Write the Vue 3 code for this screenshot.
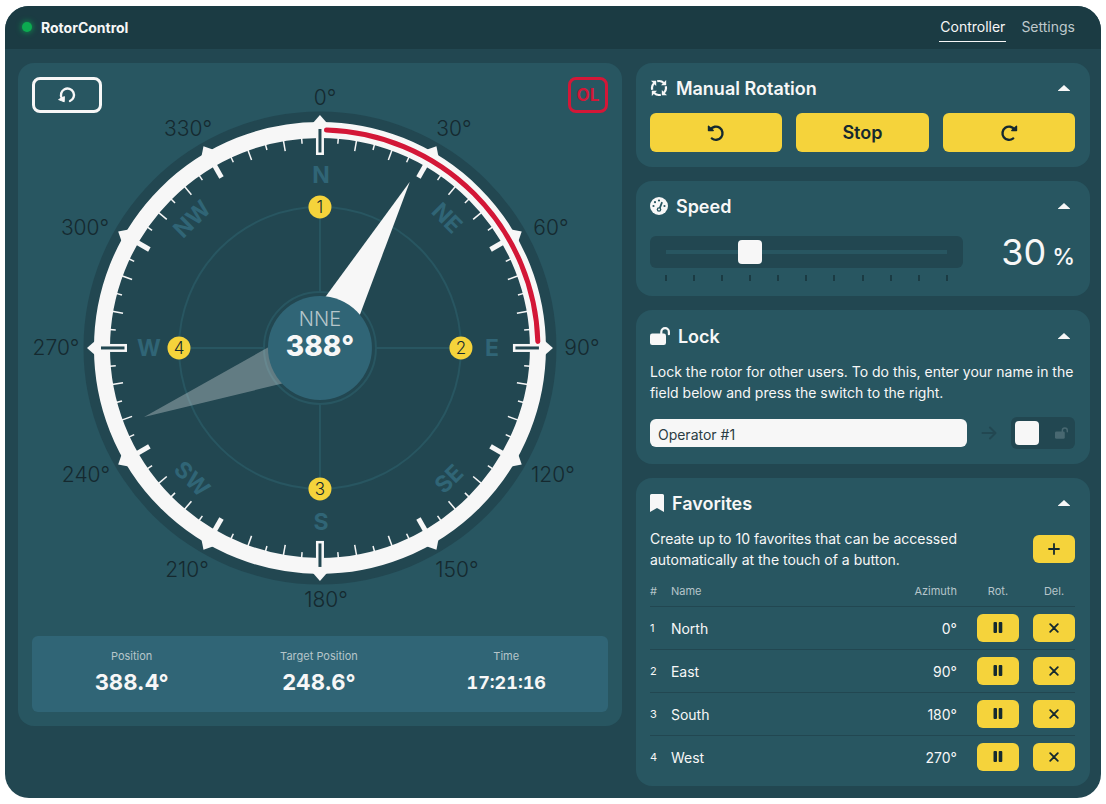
<script setup>
import { ref } from 'vue'

const operator = ref('Operator #1')
const speed = ref(30)
const locked = ref(false)

const stats = [
  { label: 'Position', value: '388.4°' },
  { label: 'Target Position', value: '248.6°' },
  { label: 'Time', value: '17:21:16', small: true },
]

const favorites = [
  { id: 1, name: 'North', azimuth: 0 },
  { id: 2, name: 'East', azimuth: 90 },
  { id: 3, name: 'South', azimuth: 180 },
  { id: 4, name: 'West', azimuth: 270 },
]

// Dial coordinates are relative to the centre of the compass.
const ticks = Array.from({ length: 72 }, (_, i) => i * 5)
  .filter((a) => a % 30 !== 0)
  .map((a) => ({ a, end: a % 10 === 0 ? -200 : -205 }))
const majors = [30, 60, 120, 150, 210, 240, 300, 330]
const cardinals = [0, 90, 180, 270]
const arrows = Array.from({ length: 12 }, (_, i) => i * 30)

const degrees = [
  { v: 0, x: 5, y: -250 },
  { v: 30, x: 134, y: -219 },
  { v: 60, x: 231, y: -120 },
  { v: 90, x: 262, y: 0 },
  { v: 120, x: 233, y: 127 },
  { v: 150, x: 137, y: 222 },
  { v: 180, x: 6, y: 252 },
  { v: 210, x: -133, y: 222 },
  { v: 240, x: -234, y: 127 },
  { v: 270, x: -264, y: 0 },
  { v: 300, x: -235, y: -120 },
  { v: 330, x: -132, y: -219 },
]

const directions = [
  { t: 'N', x: 1, y: -173, r: 0 },
  { t: 'NE', x: 127, y: -130, r: 45 },
  { t: 'E', x: 172, y: 0, r: 0 },
  { t: 'SE', x: 129, y: 131, r: -45 },
  { t: 'S', x: 1, y: 174, r: 0 },
  { t: 'SW', x: -128, y: 131, r: 45 },
  { t: 'W', x: -171, y: 0, r: 0 },
  { t: 'NW', x: -128, y: -129, r: -45 },
]

const pins = [
  { n: 1, x: 0, y: -141 },
  { n: 2, x: 141, y: 0 },
  { n: 3, x: 0, y: 141 },
  { n: 4, x: -141, y: 0 },
]
</script>

<template>
  <div class="frame">
    <header class="topbar">
      <div class="brand"><span class="status"></span>RotorControl</div>
      <nav class="nav">
        <a href="#controller" class="active">Controller</a>
        <a href="#settings">Settings</a>
      </nav>
    </header>

    <main class="layout">
      <section class="panel compass-panel">
        <div class="compass-bar">
          <button class="outline reset" type="button" aria-label="Reset rotation">
            <svg width="18" height="18" viewBox="0 0 18 18">
              <path d="M3.8 12.2A6.5 6.5 0 1 1 12 15" fill="none" stroke="currentColor" stroke-width="2.4" stroke-linecap="round" />
              <path d="M.6 13.6 6.4 10.6 6.2 15.8Z" fill="currentColor" stroke="currentColor" stroke-linejoin="round" />
            </svg>
          </button>
          <button class="outline overlap" type="button">OL</button>
        </div>

        <svg class="compass" viewBox="-288 -271 576 542" role="img" aria-label="Compass">
          <circle r="236.5" class="dial" />
          <circle r="141" class="guide" />
          <circle r="56" class="guide" />
          <path d="M0-141V-56M0 56V141M-141 0H-56M56 0H141" class="guide" />

          <circle r="218" class="ring" />
          <line v-for="t in ticks" :key="'t' + t.a" y1="-211" :y2="t.end" :transform="`rotate(${t.a})`" class="tick" />
          <line v-for="a in majors" :key="'m' + a" y1="-211" y2="-197" :transform="`rotate(${a})`" class="major" />
          <path v-for="a in arrows" :key="'a' + a" d="M0-233 7-225H-7Z" :transform="`rotate(${a})`" class="light" />
          <g v-for="a in cardinals" :key="'c' + a" :transform="`rotate(${a})`">
            <rect x="-4" y="-215" width="8" height="22" class="light" />
            <rect x="-1.5" y="-219" width="3" height="23.5" class="dial" />
          </g>
          <path d="M6.5-217.9A218 218 0 0 1 217.9-6.5" class="overlap-arc" />

          <text v-for="d in degrees" :key="'d' + d.v" :x="d.x" :y="d.y + 7" class="degree">{{ d.v }}°</text>
          <g v-for="d in directions" :key="d.t" :transform="`translate(${d.x} ${d.y}) rotate(${d.r})`">
            <text y="8" class="direction">{{ d.t }}</text>
          </g>

          <path d="M0-189 26 0H-26Z" transform="rotate(248.6)" class="light target" />
          <path d="M0-189 26 0H-26Z" transform="rotate(28.4)" class="light" />
          <g v-for="p in pins" :key="'p' + p.n" :transform="`translate(${p.x} ${p.y})`">
            <circle r="11.5" class="pin" />
            <text y="6" class="pin-text">{{ p.n }}</text>
          </g>
          <circle r="52" class="hub" />
          <text y="-22" class="hub-name">NNE</text>
          <text y="8" class="hub-value">388°</text>
        </svg>

        <dl class="stats">
          <div v-for="s in stats" :key="s.label">
            <dt>{{ s.label }}</dt>
            <dd :class="{ small: s.small }">{{ s.value }}</dd>
          </div>
        </dl>
      </section>

      <div class="side">
        <section class="panel">
          <div class="title">
            <svg width="18" height="18" viewBox="0 0 18 18">
              <g v-for="a in cardinals" :key="a" :transform="`rotate(${a} 9 9)`">
                <path d="M7.2 2.3Q11 1.2 13.8 4" fill="none" stroke="currentColor" stroke-width="2.2" />
                <path d="M16.2 1V6.2H11Z" fill="currentColor" />
              </g>
            </svg>
            <h2>Manual Rotation</h2>
            <button class="caret" type="button" aria-label="Collapse Manual Rotation">
              <svg width="12" height="6" viewBox="0 0 12 6"><path d="M6 0 12 5.5V6H0V5.5Z" fill="currentColor" /></svg>
            </button>
          </div>
          <div class="rotation">
            <button class="yellow" type="button" aria-label="Rotate counterclockwise">
              <svg width="18" height="18" viewBox="0 0 18 18">
                <path d="M3.4 5.6A6.6 6.6 0 1 1 4.8 14.4" fill="none" stroke="currentColor" stroke-width="2.4" stroke-linecap="round" />
                <path d="M1.5 2.2V6.6H6.2Z" fill="currentColor" stroke="currentColor" stroke-width="1.4" stroke-linejoin="round" />
              </svg>
            </button>
            <button class="yellow" type="button">Stop</button>
            <button class="yellow" type="button" aria-label="Rotate clockwise">
              <svg width="18" height="18" viewBox="0 0 18 18">
                <path d="M14.6 5.6A6.6 6.6 0 1 0 13.2 14.4" fill="none" stroke="currentColor" stroke-width="2.4" stroke-linecap="round" />
                <path d="M16.5 2.2V6.6H11.8Z" fill="currentColor" stroke="currentColor" stroke-width="1.4" stroke-linejoin="round" />
              </svg>
            </button>
          </div>
        </section>

        <section class="panel">
          <div class="title">
            <svg width="18" height="18" viewBox="0 0 18 18">
              <circle cx="9" cy="9" r="9" fill="currentColor" />
              <g class="cut">
                <circle cx="9" cy="3.5" r="1.1" /><circle cx="5" cy="5.2" r="1.1" />
                <circle cx="3.5" cy="9" r="1.1" /><circle cx="14.5" cy="9" r="1.1" />
                <circle cx="9" cy="12.5" r="2.3" />
                <path d="M11.3 4.7 12.9 5.4 10.2 12.5 8.5 11.8Z" />
              </g>
              <circle cx="9" cy="12.5" r="1" fill="currentColor" />
            </svg>
            <h2>Speed</h2>
            <button class="caret" type="button" aria-label="Collapse Speed">
              <svg width="12" height="6" viewBox="0 0 12 6"><path d="M6 0 12 5.5V6H0V5.5Z" fill="currentColor" /></svg>
            </button>
          </div>
          <div class="speed">
            <div class="slider">
              <div class="slider-box">
                <input v-model="speed" type="range" min="0" max="100" aria-label="Speed" />
              </div>
              <div class="marks"><i v-for="n in 11" :key="n"></i></div>
            </div>
            <output class="percent"><span>{{ speed }}</span><small>%</small></output>
          </div>
        </section>

        <section class="panel">
          <div class="title tall">
            <svg width="20" height="18" viewBox="0 0 20 18">
              <rect y="6.5" width="16" height="11.5" rx="2.2" fill="currentColor" />
              <path d="M11.3 8V5A3.8 3.8 0 0 1 18.9 5V7.2" fill="none" stroke="currentColor" stroke-width="2.2" stroke-linecap="round" />
            </svg>
            <h2>Lock</h2>
            <button class="caret" type="button" aria-label="Collapse Lock">
              <svg width="12" height="6" viewBox="0 0 12 6"><path d="M6 0 12 5.5V6H0V5.5Z" fill="currentColor" /></svg>
            </button>
          </div>
          <p class="copy">Lock the rotor for other users. To do this, enter your name in the field below and press the switch to the right.</p>
          <div class="lock-row">
            <input v-model="operator" class="field" type="text" aria-label="Operator name" />
            <svg class="arrow" width="16" height="16" viewBox="0 0 16 16">
              <path d="M1.5 8H14M9 2.5 14.5 8 9 13.5" fill="none" stroke="currentColor" stroke-width="2" stroke-linecap="round" stroke-linejoin="round" />
            </svg>
            <label class="switch">
              <input v-model="locked" type="checkbox" aria-label="Lock rotor" />
              <svg width="13" height="12" viewBox="0 0 20 18">
                <rect y="6.5" width="15" height="11.5" rx="2.2" fill="currentColor" />
                <path d="M11.3 8V5A3.8 3.8 0 0 1 18.9 5V7.2" fill="none" stroke="currentColor" stroke-width="2.2" stroke-linecap="round" />
              </svg>
            </label>
          </div>
        </section>

        <section class="panel">
          <div class="title">
            <svg width="14" height="18" viewBox="0 0 14 18"><path d="M1.5 0H12.5Q14 0 14 1.5V18L7 14 0 18V1.5Q0 0 1.5 0Z" fill="currentColor" /></svg>
            <h2>Favorites</h2>
            <button class="caret" type="button" aria-label="Collapse Favorites">
              <svg width="12" height="6" viewBox="0 0 12 6"><path d="M6 0 12 5.5V6H0V5.5Z" fill="currentColor" /></svg>
            </button>
          </div>
          <div class="fav-intro">
            <p class="copy">Create up to 10 favorites that can be accessed automatically at the touch of a button.</p>
            <button class="yellow mini" type="button" aria-label="Add favorite">
              <svg width="12" height="12" viewBox="0 0 12 12"><path d="M6 1V11M1 6H11" stroke="currentColor" stroke-width="1.8" stroke-linecap="round" /></svg>
            </button>
          </div>
          <table>
            <thead>
              <tr>
                <th class="num">#</th>
                <th>Name</th>
                <th class="az">Azimuth</th>
                <th class="act">Rot.</th>
                <th class="act">Del.</th>
              </tr>
            </thead>
            <tbody>
              <tr v-for="f in favorites" :key="f.id">
                <td class="num">{{ f.id }}</td>
                <td>{{ f.name }}</td>
                <td class="az">{{ f.azimuth }}°</td>
                <td class="act">
                  <button class="yellow mini" type="button" :aria-label="'Rotate to ' + f.name">
                    <svg width="10" height="11" viewBox="0 0 10 11"><path d="M.5 1Q.5 0 1.5 0H3Q4 0 4 1V10Q4 11 3 11H1.5Q.5 11 .5 10ZM5.7 1Q5.7 0 6.7 0H8.3Q9.3 0 9.3 1V10Q9.3 11 8.3 11H6.7Q5.7 11 5.7 10Z" fill="currentColor" /></svg>
                  </button>
                </td>
                <td class="act">
                  <button class="yellow mini" type="button" :aria-label="'Delete ' + f.name">
                    <svg width="10" height="10" viewBox="0 0 10 10"><path d="M1.2 1.2 8.8 8.8M8.8 1.2 1.2 8.8" stroke="currentColor" stroke-width="1.8" stroke-linecap="round" /></svg>
                  </button>
                </td>
              </tr>
            </tbody>
          </table>
        </section>
      </div>
    </main>
  </div>
</template>

<style>
body {
  background: #fff;
}
</style>

<style scoped>
* {
  box-sizing: border-box;
}
.frame {
  margin: 6px 5px;
  border-radius: 24px;
  overflow: hidden;
  background: #224751;
  color: #f7f7f7;
  font-family: Inter, "Liberation Sans", sans-serif;
  font-size: 14px;
  line-height: 21px;
}
button,
input {
  font-family: inherit;
  margin: 0;
}
svg {
  display: block;
}
.topbar {
  display: flex;
  justify-content: space-between;
  align-items: center;
  height: 43px;
  padding: 0 25px 0 17px;
  background: #1b3b43;
}
.brand {
  display: flex;
  align-items: center;
  gap: 9px;
  padding-bottom: 1px;
  font-weight: 700;
}
.status {
  width: 10px;
  height: 10px;
  border-radius: 50%;
  background: #0cab50;
  box-shadow: 0 0 6px #0cab50;
}
.nav {
  display: flex;
  gap: 14px;
}
.nav a {
  padding: 3px 1px 4px;
  border-bottom: 1px solid transparent;
  color: #bfc9cc;
  text-decoration: none;
}
.nav .active {
  color: #f7f7f7;
  border-color: #f7f7f7;
}
.layout {
  display: grid;
  grid-template-columns: 133fr 100fr;
  gap: 14px;
  align-items: start;
  padding: 14px 11px 12px 13px;
}
.panel {
  background: #285661;
  border-radius: 16px;
  padding: 14px 15px 15px 14px;
}
.side {
  display: grid;
  gap: 14px;
}
.compass-panel {
  position: relative;
  padding: 14px;
}
.compass-bar {
  position: absolute;
  top: 14px;
  left: 14px;
  right: 14px;
  display: flex;
  justify-content: space-between;
}
.outline {
  display: flex;
  align-items: center;
  justify-content: center;
  height: 36px;
  padding: 0;
  border: 3px solid #f7f7f7;
  border-radius: 8px;
  background: none;
  color: #f7f7f7;
}
.reset {
  width: 70px;
}
.overlap {
  width: 40px;
  border-color: #d31737;
  color: #d31737;
  font-size: 17px;
  font-weight: 700;
}
.compass {
  width: 100%;
  margin-bottom: 17px;
}
.dial {
  fill: #224751;
}
.guide {
  fill: none;
  stroke: #285661;
  stroke-width: 2;
}
.ring {
  fill: none;
  stroke: #f7f7f7;
  stroke-width: 16;
}
.tick {
  stroke: #f7f7f7;
  stroke-width: 1.5;
}
.major {
  stroke: #f7f7f7;
  stroke-width: 5;
}
.light {
  fill: #f7f7f7;
}
.target {
  opacity: 0.3;
}
.overlap-arc {
  fill: none;
  stroke: #d31737;
  stroke-width: 5;
  stroke-linecap: round;
}
.degree,
.direction,
.pin-text,
.hub-name,
.hub-value {
  text-anchor: middle;
}
.degree {
  fill: #15292f;
  font-size: 21px;
  font-weight: 300;
}
.direction {
  fill: #306576;
  font-size: 23px;
  font-weight: 700;
}
.pin {
  fill: #f5d33b;
}
.pin-text {
  fill: #15292f;
  font-size: 17px;
  font-weight: 300;
}
.hub {
  fill: #306576;
}
.hub-name {
  fill: #b6c5ca;
  font-size: 20px;
  font-weight: 300;
}
.hub-value {
  fill: #f7f7f7;
  font-size: 28px;
  font-weight: 800;
}
.stats {
  display: grid;
  grid-template-columns: repeat(3, 1fr);
  margin: 0;
  padding: 10px 8px 15px 6px;
  border-radius: 6px;
  background: #306576;
  text-align: center;
}
.stats dt {
  font-size: 11px;
  color: #b6c5ca;
}
.stats dd {
  margin: 0;
  line-height: 30px;
  font-size: 22px;
  font-weight: 700;
}
.stats .small {
  padding-top: 2px;
  line-height: 28px;
  font-size: 18px;
  font-variant-numeric: tabular-nums;
}
.title {
  display: flex;
  align-items: center;
  gap: 8px;
  height: 22px;
  margin-bottom: 14px;
}
.tall {
  height: 24px;
  margin-bottom: 13px;
}
h2 {
  flex: 1;
  margin: 0;
  padding-top: 2px;
  font-size: 18px;
  line-height: 22px;
  font-weight: 600;
}
.caret {
  display: flex;
  align-items: center;
  justify-content: center;
  width: 22px;
  height: 22px;
  padding: 0;
  border: 0;
  background: none;
  color: #f7f7f7;
}
.cut {
  fill: #285661;
}
.rotation {
  display: grid;
  grid-template-columns: repeat(3, 1fr);
  gap: 14px;
}
.yellow {
  display: flex;
  align-items: center;
  justify-content: center;
  height: 39px;
  padding: 0;
  border: 0;
  border-radius: 6px;
  background: #f5d33b;
  color: #15292f;
  font-size: 18px;
  font-weight: 600;
}
.mini {
  flex: none;
  width: 42px;
  height: 28px;
}
.speed {
  display: flex;
  gap: 40px;
  padding-top: 5px;
}
.slider {
  flex: 1;
}
.slider-box {
  height: 32px;
  padding: 4px;
  border-radius: 6px;
  background: #224751;
}
.slider-box input {
  display: block;
  width: 100%;
  height: 24px;
  appearance: none;
  background: linear-gradient(#285661, #285661) center / calc(100% - 24px) 4px no-repeat;
}
.slider-box input::-webkit-slider-thumb {
  appearance: none;
  width: 24px;
  height: 24px;
  border-radius: 4px;
  background: #f7f7f7;
}
.marks {
  display: flex;
  justify-content: space-between;
  padding: 7px 15px 0;
}
.marks i {
  width: 2px;
  height: 6px;
  background: #1b3b43;
}
.percent {
  display: flex;
  align-items: baseline;
  justify-content: flex-end;
  gap: 6px;
  width: 72px;
  height: 32px;
  font-size: 36px;
  line-height: 32px;
}
.percent small {
  font-size: 23px;
  font-weight: 500;
}
.copy {
  margin: 0;
}
.lock-row {
  display: flex;
  align-items: center;
  gap: 14px;
  margin-top: 14px;
}
.field {
  flex: 1;
  min-width: 0;
  height: 28px;
  padding: 2px 8px 0;
  border: 0;
  border-radius: 6px;
  background: #f7f7f7;
  color: #2b3d43;
  font-size: 14px;
}
.arrow {
  color: #224751;
}
.switch {
  position: relative;
}
.switch input {
  display: block;
  width: 64px;
  height: 32px;
  padding: 4px;
  appearance: none;
  border-radius: 6px;
  background: #224751;
}
.switch input::before {
  content: "";
  display: block;
  width: 24px;
  height: 24px;
  border-radius: 4px;
  background: #f7f7f7;
}
.switch input:checked::before {
  margin-left: auto;
}
.switch svg {
  position: absolute;
  right: 7px;
  top: 10px;
  color: #486871;
}
.fav-intro {
  display: flex;
  align-items: center;
  justify-content: space-between;
  gap: 60px;
}
table {
  width: 100%;
  margin-top: 7px;
  border-collapse: collapse;
}
th {
  height: 29px;
  padding: 0;
  text-align: left;
  font-size: 11px;
  font-weight: 400;
  color: #b6c5ca;
}
td {
  height: 43px;
  padding: 9px 0 7px;
  border-top: 1px solid #224751;
}
td.act {
  padding-top: 7px;
}
tr:last-child td {
  height: 36px;
  padding-bottom: 0;
}
.num {
  width: 21px;
  font-size: 11px;
}
.az {
  width: 80px;
  padding-right: 6px;
  text-align: right;
}
.act {
  width: 56px;
  padding-left: 14px;
}
th.act {
  text-align: center;
}
td.az {
  padding-right: 6px;
}
</style>
